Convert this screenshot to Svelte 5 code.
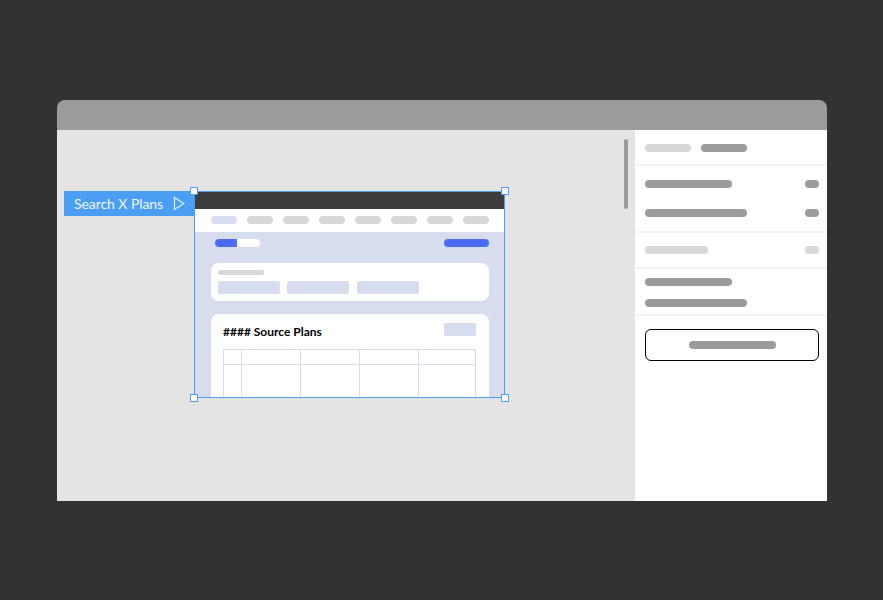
<script>
  const navItems = [true, false, false, false, false, false, false, false];
  const columns = [1, 2, 3, 4, 5];
</script>

<div class="page">
  <div class="window">
    <div class="titlebar"></div>
    <div class="content">
      <div class="canvas">
        <div class="scrollbar"></div>
        <div class="tag">
          <span>Search X Plans</span>
          <svg width="13" height="15" viewBox="0 0 13 15" fill="none" aria-hidden="true">
            <path d="M2.5 1.5 L11.7 7.5 L2.5 13.5 Z" stroke="#e3f0fe" stroke-width="1.2" stroke-linejoin="miter" />
          </svg>
        </div>
        <div class="artboard">
          <div class="clip">
            <div class="darkbar"></div>
            <div class="nav">
              {#each navItems as active}
                <span class="navpill" class:active></span>
              {/each}
            </div>
            <div class="main">
              <div class="toolbar">
                <div class="progress"><span></span></div>
                <div class="action"></div>
              </div>
              <div class="card filters">
                <div class="filterline"></div>
                <div class="blocks">
                  <span></span><span></span><span></span>
                </div>
              </div>
              <div class="card plans">
                <div class="planhead">
                  <span class="plantitle">#### Source Plans</span>
                  <span class="planbtn"></span>
                </div>
                <div class="table">
                  {#each [0, 1] as row}
                    <div class="row" class:tall={row === 1}>
                      {#each columns as col}
                        <span class="cell"></span>
                      {/each}
                    </div>
                  {/each}
                </div>
              </div>
            </div>
          </div>
          <i class="handle tl"></i>
          <i class="handle tr"></i>
          <i class="handle bl"></i>
          <i class="handle br"></i>
        </div>
      </div>
      <aside class="panel">
        <section class="s1">
          <span class="pill light w46"></span>
          <span class="pill w46"></span>
        </section>
        <section class="s2">
          <div class="line"><span class="pill w87"></span><span class="pill w14"></span></div>
          <div class="line"><span class="pill w102"></span><span class="pill w14"></span></div>
        </section>
        <section class="s3">
          <div class="line"><span class="pill light w63"></span><span class="pill light w14"></span></div>
        </section>
        <section class="s4">
          <span class="pill w87"></span>
          <span class="pill w102"></span>
        </section>
        <div class="buttonwrap">
          <div class="outline"><span class="pill w87"></span></div>
        </div>
      </aside>
    </div>
  </div>
</div>

<style>
  :global(body) {
    margin: 0;
    background: #323232;
  }
  .page {
    height: 600px;
    padding: 100px 56px 0 57px;
    box-sizing: border-box;
    overflow: hidden;
  }
  .window {
    height: 401px;
    border-radius: 8px 8px 0 0;
    overflow: hidden;
    display: flex;
    flex-direction: column;
  }
  .titlebar {
    height: 30px;
    flex: none;
    background: #9b9b9b;
  }
  .content {
    flex: 1;
    display: flex;
    min-height: 0;
  }
  .canvas {
    position: relative;
    flex: 1;
    background: #e4e4e4;
  }
  .scrollbar {
    position: absolute;
    left: 567px;
    top: 9px;
    width: 4px;
    height: 70px;
    border-radius: 2px;
    background: #9b9b9b;
  }
  .tag {
    position: absolute;
    left: 7px;
    top: 61px;
    width: 131px;
    height: 25px;
    box-sizing: border-box;
    padding-left: 10px;
    display: flex;
    align-items: center;
    gap: 9px;
    background: #4a9ff5;
    color: #f2f8fe;
    font: 400 14px/25px Lato, sans-serif;
    letter-spacing: -0.06px;
    white-space: nowrap;
  }
  .tag svg {
    flex: none;
    margin-top: -1px;
  }
  .artboard {
    position: absolute;
    left: 137px;
    top: 61px;
    width: 311px;
    height: 207px;
    box-sizing: border-box;
    border: 1px solid #4a9ff5;
  }
  .clip {
    width: 100%;
    height: 100%;
    overflow: hidden;
    background: #d8dcef;
  }
  .handle {
    position: absolute;
    width: 6px;
    height: 6px;
    background: #fff;
    border: 1px solid #4a9ff5;
  }
  .tl { left: -5px; top: -5px; }
  .tr { right: -5px; top: -5px; }
  .bl { left: -5px; bottom: -5px; }
  .br { right: -5px; bottom: -5px; }
  .darkbar {
    height: 17px;
    background: #3c3c3c;
  }
  .nav {
    height: 23px;
    box-sizing: border-box;
    padding: 7px 15px 0 16px;
    display: flex;
    gap: 10px;
    background: #fff;
  }
  .navpill {
    flex: none;
    width: 26px;
    height: 8px;
    border-radius: 4px;
    background: #d8d8d8;
  }
  .navpill.active {
    background: #d8dcef;
  }
  .main {
    padding: 7px 15px 0 16px;
  }
  .toolbar {
    display: flex;
    justify-content: space-between;
    padding-left: 4px;
  }
  .progress {
    width: 45px;
    height: 8px;
    border-radius: 4px;
    background: #fff;
    overflow: hidden;
  }
  .progress span {
    display: block;
    width: 22px;
    height: 8px;
    background: #4a6cf7;
  }
  .action {
    width: 45px;
    height: 8px;
    border-radius: 4px;
    background: #4a6cf7;
  }
  .card {
    background: #fff;
    border-radius: 8px;
  }
  .filters {
    margin-top: 16px;
    height: 38px;
    box-sizing: border-box;
    padding: 7px 7px 0;
  }
  .filterline {
    width: 46px;
    height: 5px;
    border-radius: 2px;
    background: #d8d8d8;
  }
  .blocks {
    margin-top: 6px;
    display: flex;
    gap: 7px;
  }
  .blocks span {
    width: 62px;
    height: 13px;
    border-radius: 2px;
    background: #d8dcef;
  }
  .blocks span:last-child {
    margin-left: 1px;
  }
  .plans {
    margin-top: 13px;
    height: 120px;
    box-sizing: border-box;
    padding: 9px 13px 0 12px;
  }
  .planhead {
    display: flex;
    justify-content: space-between;
    height: 26px;
    margin-bottom: 0;
  }
  .plantitle {
    font: 700 12px/18px Lato, sans-serif;
    color: #000;
    white-space: nowrap;
  }
  .planbtn {
    width: 32px;
    height: 13px;
    border-radius: 1px;
    background: #d8dcef;
  }
  .table {
    border-top: 1px solid #d8dcef;
    border-left: 1px solid #d8dcef;
  }
  .row {
    display: grid;
    grid-template-columns: 18px 59px 59px 59px 57px;
    height: 15px;
    border-bottom: 1px solid #d8dcef;
    box-sizing: border-box;
    border-right: 0;
  }
  .row.tall {
    height: 60px;
  }
  .cell {
    border-right: 1px solid #d8dcef;
  }
  .panel {
    width: 192px;
    flex: none;
    background: #fff;
  }
  .panel section {
    box-sizing: border-box;
    padding: 0 8px 0 10px;
    border-bottom: 2px solid #f3f3f3;
  }
  .pill {
    display: block;
    height: 8px;
    border-radius: 4px;
    background: #9b9b9b;
    flex: none;
  }
  .pill.light {
    background: #d8d8d8;
  }
  .w14 { width: 14px; }
  .w46 { width: 46px; }
  .w63 { width: 63px; }
  .w87 { width: 87px; }
  .w102 { width: 102px; }
  .line {
    display: flex;
    justify-content: space-between;
  }
  .s1 {
    height: 36px;
    padding-top: 14px !important;
    display: flex;
    gap: 10px;
  }
  .s2 {
    height: 67px;
    padding-top: 14px !important;
    display: flex;
    flex-direction: column;
    gap: 21px;
  }
  .s3 {
    height: 36px;
    padding-top: 13px !important;
  }
  .s4 {
    height: 47px;
    padding-top: 9px !important;
    display: flex;
    flex-direction: column;
    gap: 13px;
  }
  .buttonwrap {
    padding: 13px 8px 0 10px;
  }
  .outline {
    height: 32px;
    box-sizing: border-box;
    border: 1px solid #000;
    border-radius: 6px;
    display: flex;
    align-items: center;
    justify-content: center;
  }
</style>
